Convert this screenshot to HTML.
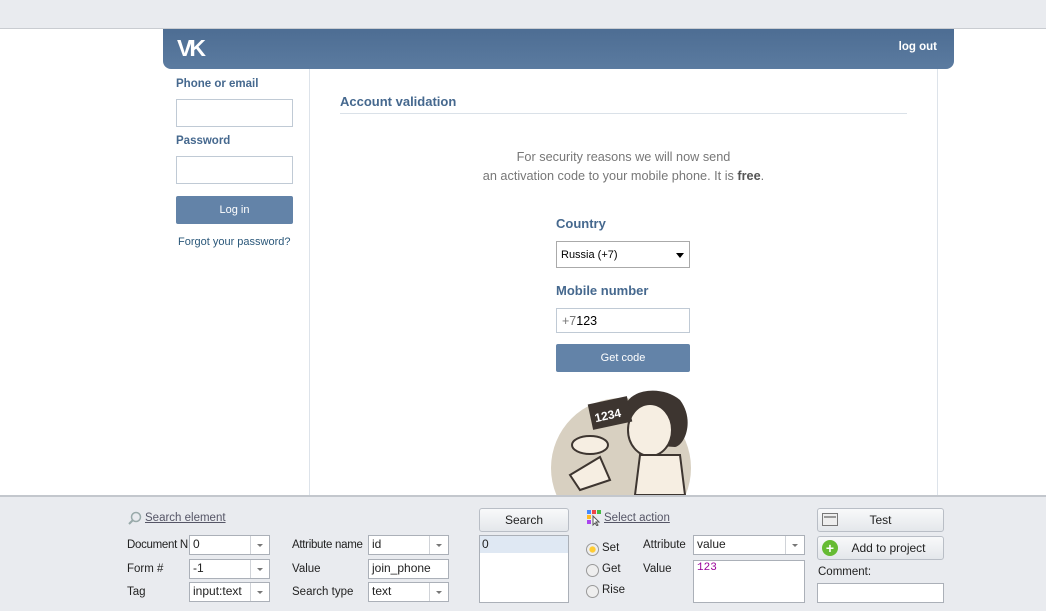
<!DOCTYPE html>
<html><head><meta charset="utf-8"><style>
*{box-sizing:border-box;margin:0;padding:0}
body{width:1046px;height:611px;overflow:hidden;background:#fff;font-family:Tahoma,"Liberation Sans","DejaVu Sans",sans-serif;position:relative}
.a{position:absolute}
.top{left:0;top:0;width:1046px;height:29px;background:#e9ebef;border-bottom:1px solid #c9ccd1}
.hdr{left:163px;top:29px;width:791px;height:40px;background:linear-gradient(#4d6d93,#5b7ba0);border-radius:0 0 8px 8px}
.lbl{font-size:11px;font-weight:bold;color:#45688e}
.inp{border:1px solid #c0cad5;background:#fff}
.btn{background:#6383a8;color:#fff;font-size:11px;text-align:center;border-radius:2px}
.panel{left:0;top:495px;width:1046px;height:116px;background:#e9ebef;border-top:2px solid #c3c7cd;font-size:11.5px;color:#222}
.f{position:absolute;border:1px solid #abb0b8;background:#fff;height:20px;font-size:12px;padding:1px 3px}
.dd::after{content:"";position:absolute;right:0;top:0;width:18px;height:18px;border-left:1px solid #d0d3d8;background:#fff}
.dd::before{content:"";position:absolute;right:6px;top:8px;border:3px solid transparent;border-top:3px solid #777;z-index:2}
.pb{position:absolute;border:1px solid #b9bec6;border-radius:3px;background:linear-gradient(#f8f9fa,#e4e7eb);font-size:12px;text-align:center;line-height:22px}
.rad{position:absolute;width:13px;height:13px;border-radius:50%;border:1px solid #999;background:#eee}
</style></head><body>
<div class="a top"></div>
<div class="a hdr">
<div class="a" style="left:14px;top:8px;color:#fff;font:bold 23px/23px 'Liberation Sans',sans-serif;letter-spacing:-3px">VK</div>
<div class="a" style="right:17px;top:12px;color:#fff;font-size:11.5px;font-weight:bold">log out</div>
</div>
<div class="a" style="left:309px;top:69px;width:1px;height:426px;background:#dde3ea"></div>
<div class="a" style="left:937px;top:69px;width:1px;height:426px;background:#dde3ea"></div>
<div class="a lbl" style="left:176px;top:78px;font-size:11.5px">Phone or email</div>
<div class="a inp" style="left:176px;top:99px;width:117px;height:28px"></div>
<div class="a lbl" style="left:176px;top:135px;font-size:11.5px">Password</div>
<div class="a inp" style="left:176px;top:156px;width:117px;height:28px"></div>
<div class="a btn" style="left:176px;top:196px;width:117px;height:28px;line-height:28px">Log in</div>
<div class="a" style="left:178px;top:236px;font-size:11px;color:#2b587a">Forgot your password?</div>
<div class="a" style="left:340px;top:94px;font-size:13px;font-weight:bold;color:#45688e">Account validation</div>
<div class="a" style="left:340px;top:113px;width:567px;height:1px;background:#dae1e8"></div>
<div class="a" style="left:340px;top:148px;width:567px;text-align:center;font-size:12.7px;line-height:19px;color:#777">For security reasons we will now send<br>an activation code to your mobile phone. It is <b style="color:#555">free</b>.</div>
<div class="a lbl" style="left:556px;top:216px;font-size:13px">Country</div>
<div class="a inp" style="left:556px;top:241px;width:134px;height:27px;border-color:#aaa;font-size:11px;padding:7px 4px;color:#000">Russia (+7)<span class="a" style="right:5px;top:11px;border:4px solid transparent;border-top:5px solid #000"></span></div>
<div class="a lbl" style="left:556px;top:283px;font-size:13px">Mobile number</div>
<div class="a inp" style="left:556px;top:308px;width:134px;height:25px;font-size:12.5px;padding:5px 5px"><span style="color:#777">+7</span>123</div>
<div class="a btn" style="left:556px;top:344px;width:134px;height:28px;line-height:28px">Get code</div>
<svg class="a" style="left:550px;top:385px" width="150" height="110">
<circle cx="71" cy="83" r="70" fill="#d8d0c1"/>
<path d="M75 30 C70 5 110 -2 130 15 C145 35 135 60 125 62 L95 60 Z" fill="#3d3530"/>
<ellipse cx="100" cy="45" rx="22" ry="26" fill="#f6eee2" stroke="#3d3530" stroke-width="2"/>
<path d="M90 70 L130 70 L135 110 L85 110 Z" fill="#f6eee2" stroke="#3d3530" stroke-width="2"/>
<rect x="40" y="15" width="40" height="26" fill="#3d3530" transform="rotate(-12 60 28)"/>
<text x="44" y="34" fill="#fff" font-size="12" font-weight="bold" font-family="Liberation Sans" transform="rotate(-12 60 28)">1234</text>
<path d="M20 90 L50 72 L60 95 L30 105 Z" fill="#f6eee2" stroke="#3d3530" stroke-width="2"/>
<ellipse cx="40" cy="60" rx="18" ry="9" fill="#f6eee2" stroke="#3d3530" stroke-width="2"/>
</svg>
<div class="a panel">
<svg class="a" style="left:128px;top:14px" width="14" height="14"><circle cx="8" cy="6" r="4.5" fill="none" stroke="#9aa" stroke-width="1.5"/><path d="M5 9 L1 13" stroke="#9aa" stroke-width="2"/></svg>
<div class="a" style="left:145px;top:15px;color:#556;text-decoration:underline">Search element</div>
<div class="a" style="left:127px;top:42px;letter-spacing:-0.3px">Document N</div>
<div class="f dd" style="left:189px;top:38px;width:81px">0</div>
<div class="a" style="left:127px;top:66px">Form #</div>
<div class="f dd" style="left:189px;top:62px;width:81px">-1</div>
<div class="a" style="left:127px;top:89px">Tag</div>
<div class="f dd" style="left:189px;top:85px;width:81px">input:text</div>
<div class="a" style="left:292px;top:42px;letter-spacing:-0.3px">Attribute name</div>
<div class="f dd" style="left:368px;top:38px;width:81px">id</div>
<div class="a" style="left:292px;top:66px">Value</div>
<div class="f" style="left:368px;top:62px;width:81px">join_phone</div>
<div class="a" style="left:292px;top:89px">Search type</div>
<div class="f dd" style="left:368px;top:85px;width:81px">text</div>
<div class="pb" style="left:479px;top:11px;width:90px;height:24px">Search</div>
<div class="f" style="left:479px;top:38px;width:90px;height:68px;padding:0"><div style="background:#dfe8f3;height:17px;padding:1px 2px">0</div></div>
<svg class="a" style="left:587px;top:13px" width="14" height="16"><rect x="0" y="0" width="4" height="4" fill="#48f"/><rect x="5" y="0" width="4" height="4" fill="#e44"/><rect x="10" y="0" width="4" height="4" fill="#4b4"/><rect x="0" y="5" width="4" height="4" fill="#fb2"/><rect x="0" y="10" width="4" height="4" fill="#a4e"/><path d="M6 6 L6 15 L8 13 L10 16 L11 15 L9 12 L12 12 Z" fill="#fff" stroke="#555"/></svg>
<div class="a" style="left:604px;top:15px;color:#556;text-decoration:underline">Select action</div>
<div class="rad" style="left:586px;top:46px;background:radial-gradient(#fc3 35%,#eee 45%)"></div><div class="a" style="left:602px;top:45px">Set</div>
<div class="rad" style="left:586px;top:67px"></div><div class="a" style="left:602px;top:66px">Get</div>
<div class="rad" style="left:586px;top:88px"></div><div class="a" style="left:602px;top:87px">Rise</div>
<div class="a" style="left:643px;top:42px">Attribute</div>
<div class="f dd" style="left:693px;top:38px;width:112px">value</div>
<div class="a" style="left:643px;top:66px">Value</div>
<div class="f" style="left:693px;top:63px;width:112px;height:43px;color:#909;font-family:'Liberation Mono',monospace;font-size:11px">123</div>
<div class="pb" style="left:817px;top:11px;width:127px;height:24px">Test<svg class="a" style="left:4px;top:4px" width="16" height="13"><rect x="0.5" y="0.5" width="15" height="12" fill="#eee" stroke="#777"/><rect x="2" y="3" width="12" height="2" fill="#999"/></svg></div>
<div class="pb" style="left:817px;top:39px;width:127px;height:24px;padding-left:16px">Add to project<div class="a" style="left:4px;top:3px;width:16px;height:16px;border-radius:50%;background:#6b3;color:#fff;font:bold 14px/16px sans-serif">+</div></div>
<div class="a" style="left:818px;top:69px">Comment:</div>
<div class="f" style="left:817px;top:86px;width:127px"></div>
</div>
</body></html>
